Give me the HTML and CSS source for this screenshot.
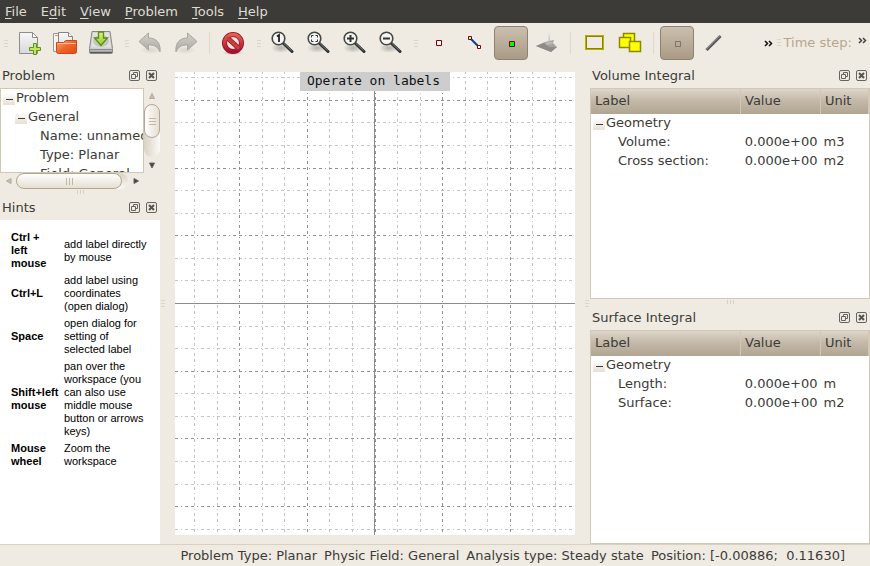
FILE: index.html
```html
<!DOCTYPE html>
<html lang="en">
<head>
<meta charset="utf-8">
<title>Problem</title>
<link rel="stylesheet" href="styles.css">
</head>
<body>
<svg class="defs" aria-hidden="true">
  <defs>
    <linearGradient id="paper" x1="0" y1="0" x2="0" y2="1"><stop offset="0" stop-color="#f8f8f8"/><stop offset="1" stop-color="#d8d8d8"/></linearGradient>
    <linearGradient id="orange" x1="0" y1="0" x2="1" y2="1"><stop offset="0" stop-color="#f9a76a"/><stop offset=".5" stop-color="#f0642a"/><stop offset="1" stop-color="#e34a12"/></linearGradient>
    <linearGradient id="green" x1="0" y1="0" x2="0" y2="1"><stop offset="0" stop-color="#e2f07c"/><stop offset="1" stop-color="#8fca2a"/></linearGradient>
    <linearGradient id="red" x1="0" y1="0" x2="0" y2="1"><stop offset="0" stop-color="#e8604c"/><stop offset="1" stop-color="#a81030"/></linearGradient>
    <linearGradient id="grey" x1="0" y1="0" x2="0" y2="1"><stop offset="0" stop-color="#d5d2cc"/><stop offset="1" stop-color="#aaa7a2"/></linearGradient>
    <linearGradient id="metal" x1="0" y1="0" x2="0" y2="1"><stop offset="0" stop-color="#777"/><stop offset=".5" stop-color="#ccc"/><stop offset="1" stop-color="#333"/></linearGradient>
    <radialGradient id="shade"><stop offset="0" stop-color="#000" stop-opacity=".25"/><stop offset="1" stop-color="#000" stop-opacity="0"/></radialGradient>
    <symbol id="lens" viewBox="0 0 24 24">
      <ellipse cx="11" cy="17" rx="10" ry="5" fill="url(#shade)"/>
      <path d="M13 12l9 8.500" stroke="#2e3133" stroke-width="3" stroke-linecap="round"/>
      <path d="M14 12.500l7.500 7" stroke="#777b7b" stroke-width="1"/>
      <circle cx="8.500" cy="7.500" r="6.300" fill="#f5f5f3" stroke="#454745" stroke-width="1.600"/>
    </symbol>
    <symbol id="float" viewBox="0 0 11 11">
      <rect x=".5" y=".5" width="10" height="10" rx="1.500" fill="none" stroke="#656460"/>
      <path d="M4.500 4.500v-2h4v4h-2M2.500 4.500h4v4h-4z" fill="none" stroke="#656460"/>
    </symbol>
    <symbol id="close" viewBox="0 0 11 11">
      <rect x=".5" y=".5" width="10" height="10" rx="1.500" fill="none" stroke="#656460"/>
      <path d="M3 3l5 5M8 3l-5 5" stroke="#55544f" stroke-width="2"/>
    </symbol>
    <symbol id="more" viewBox="0 0 9 7"><path d="M1 1l2.500 2.500L1 6M5 1l2.500 2.500L5 6" fill="none" stroke="currentColor" stroke-width="1.500"/></symbol>
  </defs>
</svg>
<div class="app">
  <nav class="menubar" aria-label="Menu">
    <button><u>F</u>ile</button><button>E<u>d</u>it</button><button><u>V</u>iew</button><button><u>P</u>roblem</button><button><u>T</u>ools</button><button><u>H</u>elp</button>
  </nav>

  <div class="toolbars">
    <div class="toolbar">
      <span class="handle"></span>
      <button class="tool" aria-label="New"><svg viewBox="0 0 24 24"><path d="M2.500 1.500h13l5 5v16h-18z" fill="url(#paper)" stroke="#8d8d8b"/><path d="M15.500 1.500v5h5z" fill="#fff" stroke="#8d8d8b"/><path d="M17.500 13.500h3v4h4v3h-4v4h-3v-4h-4v-3h4z" transform="translate(-1 -1)" fill="#c6e35c" stroke="#5a9420"/></svg></button>
      <button class="tool" aria-label="Open"><svg viewBox="0 0 24 24"><path d="M.5 2.500h10v18h-10z" fill="#f4f4f2" stroke="#999"/><path d="M2 4.500h3" stroke="#e09848"/><path d="M5.500 1.500h10l4 4v15h-14z" fill="url(#paper)" stroke="#858583"/><path d="M15.500 1.500v4h4" fill="#fff" stroke="#858583"/><path d="M3.500 11.500h7l2-2h11v11q0 2-2 2h-16q-2 0-2-2z" fill="url(#orange)" stroke="#c9481a"/><path d="M4.500 12.500h18" stroke="#ffc59d"/></svg></button>
      <button class="tool" aria-label="Save"><svg viewBox="0 0 24 24"><path d="M3 .5h18l2.500 17v4q0 1-1 1h-21q-1 0-1-1v-4z" fill="#cfcfcd" stroke="#888"/><path d="M4 1.500h16l2 15h-20z" fill="#e2e2e0"/><ellipse cx="12" cy="10" rx="8" ry="6" fill="#c4c4c2"/><path d="M1 18h22v4H1z" fill="url(#metal)"/><path d="M9.500 1h5v6h4L12 14.500 5.500 7h4z" fill="url(#green)" stroke="#5b8c16" stroke-width="1.300"/></svg></button>
    </div>
    <div class="toolbar">
      <span class="handle"></span>
      <button class="tool" aria-label="Undo"><svg viewBox="0 0 24 24"><ellipse cx="13" cy="19" rx="11" ry="4" fill="url(#shade)" opacity=".4"/><path d="M1 10.500L10.500 2v5c8 0 12.500 5 11.500 14-2-5-5-7-11.500-7v5z" fill="url(#grey)" stroke="#aaa7a1"/></svg></button>
      <button class="tool" aria-label="Redo"><svg viewBox="0 0 24 24"><ellipse cx="11" cy="19" rx="11" ry="4" fill="url(#shade)" opacity=".4"/><path d="M23 10.500L13.500 2v5C5.500 7 1 12 2 21c2-5 5-7 11.500-7v5z" fill="url(#grey)" stroke="#aaa7a1"/></svg></button>
      <span class="separator"></span>
      <button class="tool" aria-label="Stop"><svg viewBox="0 0 24 24"><ellipse cx="12" cy="22" rx="11" ry="2" fill="url(#shade)"/><circle cx="12" cy="12" r="8.500" fill="#e9e5df" stroke="#8e1526" stroke-width="5"/><path d="M6 6.500l12 11" stroke="#8e1526" stroke-width="5"/><circle cx="12" cy="12" r="8.500" fill="none" stroke="url(#red)" stroke-width="3.500"/><path d="M6 6.500l12 11" stroke="#cf3a3d" stroke-width="3.500"/></svg></button>
    </div>
    <div class="toolbar">
      <span class="handle"></span>
      <button class="tool" aria-label="Zoom 1:1"><svg viewBox="0 0 24 24"><use href="#lens"/><path d="M7 5.500L9 4v7" fill="none" stroke="#222" stroke-width="1.800"/></svg></button>
      <button class="tool" aria-label="Zoom best fit"><svg viewBox="0 0 24 24"><use href="#lens"/><path d="M5.500 6.500v-2h2M9.500 4.500h2v2M11.500 8.500v2h-2M7.500 10.500h-2v-2" fill="none" stroke="#333" stroke-width="1"/></svg></button>
      <button class="tool" aria-label="Zoom in"><svg viewBox="0 0 24 24"><use href="#lens"/><path d="M5 7.500h7M8.500 4v7" stroke="#333" stroke-width="2"/></svg></button>
      <button class="tool" aria-label="Zoom out"><svg viewBox="0 0 24 24"><use href="#lens"/><path d="M5 7.500h7" stroke="#333" stroke-width="2"/></svg></button>
    </div>
    <div class="toolbar">
      <span class="handle"></span>
      <button class="tool" aria-label="Operate on nodes"><svg viewBox="0 0 24 24"><path d="M9.500 9.500h5v5h-5z" fill="#fff" stroke="#800000"/></svg></button>
      <button class="tool" aria-label="Operate on edges"><svg viewBox="0 0 24 24"><path d="M8 8l8 8" stroke="#004586" stroke-width="2"/><path d="M5.500 5.500h3v3h-3zM14.500 14.500h3v3h-3z" fill="#fff" stroke="#800000"/></svg></button>
      <button class="tool active" aria-label="Operate on labels" aria-pressed="true"><svg viewBox="0 0 24 24"><path d="M10.500 10.500h5v5h-5z" fill="#0f0" stroke="#700000"/></svg></button>
      <button class="tool" aria-label="Postprocessor"><svg viewBox="0 0 24 24"><path d="M1 15l9-4 4-1 5-1-1 3 4 4-6 5z" fill="#a5a39f"/><path d="M1 15l8-3 5 4 8 0-6 5z" fill="#8e8c89"/><path d="M13.500 11l.500-10 1 10 3 0-1 2-5 1-2-2z" fill="#bbb9b5"/></svg></button>
      <span class="separator"></span>
      <button class="tool" aria-label="Select region"><svg viewBox="0 0 24 24"><path d="M4 5h17v13H4z" fill="#efebe3" stroke="#868300" stroke-width="2"/><path d="M3.500 4.500h18v14h-18z" fill="none" stroke="#b5b200"/></svg></button>
      <button class="tool" aria-label="Transform"><svg viewBox="0 0 24 24"><g fill="#ff0" stroke="#8c8900" stroke-width="1.500"><path d="M5.500 2.500h11v10h-11z"/><path d="M1.500 6.500h11v10h-11z"/><path d="M11.500 10.500h11v10h-11z"/></g></svg></button>
      <span class="separator"></span>
      <button class="tool active" aria-label="Point" aria-pressed="true"><svg viewBox="0 0 24 24"><path d="M10.500 10.500h5v5h-5z" fill="none" stroke="#77756f"/></svg></button>
      <button class="tool" aria-label="Line"><svg viewBox="0 0 24 24"><path d="M5.500 19l14-14" stroke="#555" stroke-width="3"/><path d="M5 18.500L19 4.500" stroke="#aaa"/></svg></button>
    </div>
    <button class="more push" aria-label="More tools"><svg viewBox="0 0 9 7"><use href="#more"/></svg></button>
    <div class="toolbar time">
      <span class="handle"></span>
      <span>Time step:</span>
      <button class="more dim" aria-label="More time tools"><svg viewBox="0 0 9 7"><use href="#more"/></svg></button>
    </div>
  </div>

  <main class="workspace">
    <div class="column">
      <section class="dock">
        <header class="dock-title"><h2>Problem</h2><button aria-label="Float"><svg viewBox="0 0 11 11"><use href="#float"/></svg></button><button aria-label="Close"><svg viewBox="0 0 11 11"><use href="#close"/></svg></button></header>
        <div class="tree-area">
          <ul class="tree">
            <li><span class="toggle"></span>Problem
              <ul>
                <li><span class="toggle"></span>General
                  <ul class="leaves"><li>Name: unnamed</li><li>Type: Planar</li><li>Field: General</li></ul>
                </li>
              </ul>
            </li>
          </ul>
          <div class="scroll-v">
            <svg viewBox="0 0 16 16"><path d="M5.500 10.500L8 5.500l2.500 5z" fill="#c9bea8" stroke="#b5ab99"/></svg>
            <div class="track"><div class="thumb"></div></div>
            <svg viewBox="0 0 16 16"><path d="M5.500 6h5L8 11z" fill="#44433f" stroke="#66645f"/></svg>
          </div>
          <div class="scroll-h">
            <svg viewBox="0 0 16 16"><path d="M11 5.500v5L6.500 8z" fill="#c9bea8" stroke="#b5ab99"/></svg>
            <div class="track"><div class="thumb"></div></div>
            <svg viewBox="0 0 16 16"><path d="M6 5.500v5l4.500-2.500z" fill="#44433f" stroke="#66645f"/></svg>
          </div>
        </div>
      </section>
      <div class="splitter"><span class="grip"></span></div>
      <section class="dock grow">
        <header class="dock-title"><h2>Hints</h2><button aria-label="Float"><svg viewBox="0 0 11 11"><use href="#float"/></svg></button><button aria-label="Close"><svg viewBox="0 0 11 11"><use href="#close"/></svg></button></header>
        <div class="hints">
          <table>
            <tr><th scope="row">Ctrl +<br>left mouse</th><td>add label directly by mouse</td></tr>
            <tr><th scope="row">Ctrl+L</th><td>add label using coordinates (open dialog)</td></tr>
            <tr><th scope="row">Space</th><td>open dialog for setting of selected label</td></tr>
            <tr><th scope="row">Shift+left mouse</th><td>pan over the workspace (you can also use middle mouse button or arrows keys)</td></tr>
            <tr><th scope="row">Mouse wheel</th><td>Zoom the workspace</td></tr>
          </table>
        </div>
      </section>
    </div>

    <div class="side-splitter"><span class="handle"></span></div>
    <section class="scene">
      <svg class="grid" viewBox="175 72 400 463" preserveAspectRatio="xMidYMid slice" aria-label="Grid">
        <g fill="none" stroke-dasharray="3 3 1 3 3 3">
          <path stroke="#c4c4c4" d="M175 77.500h399M175 122.500h399M175 145.500h399M175 190.500h399M175 213.500h399M175 258.500h399M175 280.500h399M175 326.500h399M175 348.500h399M175 393.500h399M175 416.500h399M175 461.500h399M175 484.500h399M175 529.500h399"/>
          <path stroke="#c4c4c4" d="M194.500 532V72M217.500 532V72M262.500 532V72M284.500 532V72M329.500 532V72M352.500 532V72M397.500 532V72M420.500 532V72M465.500 532V72M487.500 532V72M532.500 532V72M555.500 532V72"/>
          <path stroke="#909090" d="M175 100.500h399M175 168.500h399M175 235.500h399M175 371.500h399M175 438.500h399M175 506.500h399M239.500 532V72M307.500 532V72M375.500 532V72M442.500 532V72M510.500 532V72"/>
        </g>
        <path stroke="#8c8c8c" d="M175 303.500h400M374.500 72v463"/>
      </svg>
      <div class="mode">Operate on labels</div>
    </section>
    <div class="side-splitter right"><span class="handle"></span></div>

    <div class="column">
      <section class="dock grow">
        <header class="dock-title"><h2>Volume Integral</h2><button aria-label="Float"><svg viewBox="0 0 11 11"><use href="#float"/></svg></button><button aria-label="Close"><svg viewBox="0 0 11 11"><use href="#close"/></svg></button></header>
        <div class="values">
          <table>
            <thead><tr><th scope="col">Label</th><th scope="col">Value</th><th scope="col">Unit</th></tr></thead>
            <tbody>
              <tr><td colspan="3" class="group"><span class="toggle"></span>Geometry</td></tr>
              <tr><td class="leaf">Volume:</td><td class="number">0.000e+00</td><td>m3</td></tr>
              <tr><td class="leaf">Cross section:</td><td class="number">0.000e+00</td><td>m2</td></tr>
            </tbody>
          </table>
        </div>
      </section>
      <div class="splitter"><span class="grip"></span></div>
      <section class="dock grow taller">
        <header class="dock-title"><h2>Surface Integral</h2><button aria-label="Float"><svg viewBox="0 0 11 11"><use href="#float"/></svg></button><button aria-label="Close"><svg viewBox="0 0 11 11"><use href="#close"/></svg></button></header>
        <div class="values">
          <table>
            <thead><tr><th scope="col">Label</th><th scope="col">Value</th><th scope="col">Unit</th></tr></thead>
            <tbody>
              <tr><td colspan="3" class="group"><span class="toggle"></span>Geometry</td></tr>
              <tr><td class="leaf">Length:</td><td class="number">0.000e+00</td><td>m</td></tr>
              <tr><td class="leaf">Surface:</td><td class="number">0.000e+00</td><td>m2</td></tr>
            </tbody>
          </table>
        </div>
      </section>
    </div>
  </main>

  <footer class="status">
    <span>Problem Type: Planar</span><span>Physic Field: General</span><span>Analysis type: Steady state</span><span class="position">Position: [-0.00886;  0.11630]</span>
  </footer>
</div>
</body>
</html>
```
FILE: styles.css
```css
* { box-sizing: border-box; }
body {
  margin: 0;
  background: #efebe3;
  color: #3c3b37;
  font: 13px/19px "DejaVu Sans", sans-serif;
}
button { border: 0; padding: 0; background: none; color: inherit; font: inherit; }
svg { display: block; }
ul { list-style: none; margin: 0; padding: 0; }
.defs { position: absolute; width: 0; height: 0; }
.app { display: flex; flex-direction: column; height: 100vh; }

.menubar {
  display: flex;
  gap: 14px;
  padding: 0 5px;
  height: 23px;
  align-items: center;
  background: #3c3b37;
  color: #dfdbd2;
}
.menubar u { text-underline-offset: 2px; }

.toolbars { display: flex; align-items: center; height: 40px; }
.toolbar { display: flex; align-items: center; padding-right: 2px; }
.tool {
  display: grid;
  place-items: center;
  width: 34px;
  height: 34px;
  margin: 0 1px;
  border-radius: 4px;
}
.tool svg { width: 24px; height: 24px; }
.tool.active {
  border: 1px solid #8f826f;
  background: linear-gradient(#cbbfae, #a99b85);
}
.handle {
  width: 4px;
  height: 7px;
  margin: 0 3px 0 4px;
  background: repeating-linear-gradient(#dcd6c4 0 1px, transparent 1px 3px);
}
.separator {
  width: 1px;
  height: 22px;
  margin: 0 5px;
  background: #dfd8c8;
}
.more { color: #111; }
.more svg { width: 9px; height: 7px; }
.push { margin-left: auto; }
.time { color: #b7a68c; padding: 0 0 2px; }
.time .more { color: #44433f; margin: 0 3px 4px 6px; }

.workspace {
  flex: 1;
  min-height: 0;
  display: grid;
  grid-template-columns: 160px 15px minmax(0, 10fr) 15px minmax(0, 7fr);
}
.column { display: flex; flex-direction: column; min-height: 0; }
.dock { display: flex; flex-direction: column; min-height: 0; }
.grow { flex: 80 1 0; }
.taller { flex-grow: 81; }
.dock-title {
  display: flex;
  align-items: center;
  gap: 6px;
  height: 25px;
  padding: 0 3px 1px 2px;
}
.dock-title h2 { flex: 1; margin: 0; font: inherit; }
.dock-title svg { width: 11px; height: 11px; }
.splitter { display: grid; place-items: center; height: 6px; }
.grip {
  width: 7px;
  height: 4px;
  background: repeating-linear-gradient(90deg, #d8d1bf 0 1px, transparent 1px 3px);
}
.side-splitter { display: flex; align-items: center; }
.side-splitter .handle { margin: 0 1px; }
.side-splitter.right { justify-content: flex-end; }

.tree-area {
  display: grid;
  grid-template: 85px 16px / 1fr 16px;
}
.tree {
  overflow: hidden;
  border: 1px solid #d3c8b2;
  background: #fff;
  padding-left: 2px;
  white-space: nowrap;
}
.tree > li { margin-top: -1px; }
.tree ul { padding-left: 12px; }
.tree .leaves { padding-left: 25px; }
.toggle {
  display: inline-block;
  width: 12px;
  height: 12px;
  margin-right: 1px;
  vertical-align: -3px;
  background:
    linear-gradient(#3c3b37, #3c3b37) 3px 6px / 7px 1px no-repeat,
    linear-gradient(#fff, #e6e0d4);
}
.scroll-v { display: flex; flex-direction: column; }
.scroll-h { display: flex; }
.scroll-v svg, .scroll-h svg { width: 16px; height: 16px; flex: none; }
.track { flex: 1; border-radius: 8px; }
.scroll-v .track { background: linear-gradient(90deg, #d9d2c5, #faf9f6); }
.scroll-h .track { background: linear-gradient(#d9d2c5, #faf9f6); }
.thumb {
  display: grid;
  place-items: center;
  border: 1px solid #b5a68c;
  border-radius: 8px;
}
.scroll-v .thumb { height: 65%; background: linear-gradient(90deg, #fff, #e5dfd3); }
.scroll-h .thumb { width: 95%; height: 16px; background: linear-gradient(#fff, #e5dfd3); }
.thumb::after { content: ""; width: 7px; height: 7px; }
.scroll-v .thumb::after { background: repeating-linear-gradient(#c1b7a4 0 1px, transparent 1px 3px); }
.scroll-h .thumb::after { background: repeating-linear-gradient(90deg, #c1b7a4 0 1px, transparent 1px 3px); }

.hints {
  flex: 1;
  background: #fff;
  color: #000;
  padding: 8px;
  font: 11px/13px "Liberation Sans", sans-serif;
}
.hints table { border-spacing: 2px; width: 100%; }
.hints th, .hints td { padding: 1px; text-align: left; vertical-align: middle; }
.hints th { width: 51px; }

.scene {
  position: relative;
  margin: 9px 0;
  background: #fff;
  min-height: 0;
}
.grid { position: absolute; width: 100%; height: 100%; }
.mode {
  position: relative;
  width: max-content;
  margin: 0 auto;
  padding: 0 10px 2px 7px;
  background: #cdcdcd;
  color: #111;
  font: 13px/17px "DejaVu Sans Mono", monospace;
}

.values {
  flex: 1;
  border: 1px solid #d3c8b2;
  background: #fff;
}
.values table { width: 100%; table-layout: fixed; border-collapse: collapse; }
.values thead tr { background: linear-gradient(#ddd6ca, #c5baaa 45%, #b0a492); }
.values th {
  height: 25px;
  padding: 0 4px 2px;
  border-right: 1px solid #d3c8b8;
  font-weight: normal;
  text-align: left;
}
.values th:nth-child(2) { width: 80px; }
.values th:nth-child(3) { width: 48px; }
.values td { padding: 0 3px; white-space: nowrap; }
.values .leaf { padding-left: 27px; }
.values .group { padding-left: 2px; line-height: 18px; }
.values .number { text-align: right; }

.status {
  display: flex;
  align-items: center;
  justify-content: flex-end;
  gap: 7px;
  height: 22px;
  padding-right: 25px;
  border-top: 1px solid #d8d1bf;
}
.position { white-space: pre; }
```
